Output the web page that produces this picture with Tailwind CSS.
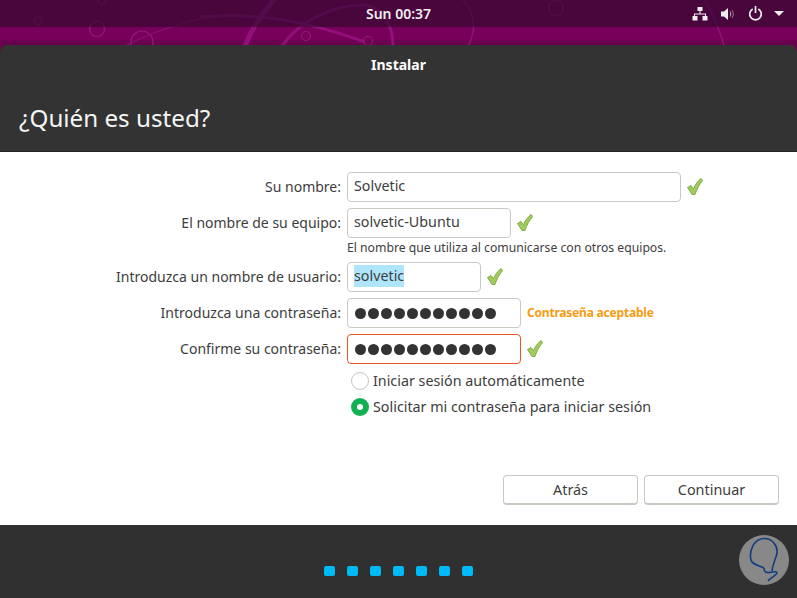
<!DOCTYPE html>
<html lang="es">
<head>
  <meta charset="UTF-8">
  <title>Instalar</title>
  <script src="https://cdn.jsdelivr.net/npm/@tailwindcss/browser@4"></script>
</head>
<body class="w-[797px] h-[598px] overflow-hidden bg-[#6e0050] font-['Noto_Sans',sans-serif] text-[#3d3d3d] relative">
  <!-- wallpaper -->
  <svg class="absolute left-0 top-0" width="797" height="46" viewBox="0 0 797 46" fill="none">
    <rect width="797" height="46" fill="#76005a"/>
    <rect y="40" width="797" height="6" fill="#6c0050"/>
    <g stroke="#93197a" stroke-width="1.2">
      <circle cx="38" cy="21" r="4"/>
      <circle cx="97" cy="29" r="7.5"/>
      <circle cx="142" cy="42" r="11"/>
      <circle cx="102" cy="0" r="4"/>
      <circle cx="306" cy="36" r="4.5"/>
      <circle cx="368" cy="41" r="4.5"/>
      <circle cx="556" cy="8" r="7.5"/>
    </g>
    <g stroke="#93107a">
      <path d="M125 46C160 28 200 16 240 14"/>
      <path d="M200 17C260 12 310 22 365 42" stroke-width="3"/>
      <path d="M245 46C252 28 262 12 278 -4" stroke-width="5"/>
      <path d="M282 46C300 20 335 4 365 5C385 8 393 28 393 46" stroke-width="3"/>
      <path d="M463 0C476 14 476 32 468 46" stroke-width="1.5"/>
      <path d="M705 0C713 15 720 30 724 46" stroke-width="1.5"/>
    </g>
    <rect width="797" height="27" fill="#2c0a2c" fill-opacity="0.62"/>
  </svg>

  <!-- top bar -->
  <div class="relative h-[27px] grid grid-cols-[1fr_auto_1fr] items-center text-[#eeeeee]">
    <div></div>
    <div class="text-[14px] font-semibold">Sun 00:37</div>
    <div class="flex justify-end items-center">
      <svg class="mr-[13px]" width="16" height="14" viewBox="0 0 16 14" fill="#eeeeee">
        <rect x="5.500" y="0" width="5" height="4"/>
        <rect x="0.500" y="9" width="5" height="4.500"/>
        <rect x="10.500" y="9" width="5" height="4.500"/>
        <path d="M7.500 4h1v2.500h5.500v3h-1v-2H3v2H2v-3h5.500z"/>
      </svg>
      <svg class="mr-[12px]" width="15" height="14" viewBox="0 0 15 14">
        <path d="M0 4.500h3L7 1v12L3 9.500H0z" fill="#eeeeee"/>
        <path d="M9 4.500c1 1.500 1 3.500 0 5" stroke="#c9a9bb" fill="none"/>
        <path d="M11 3c1.700 2.500 1.700 5.500 0 8" stroke="#9c6f8c" fill="none"/>
      </svg>
      <svg class="mr-[11px]" width="15" height="15" viewBox="0 0 16 16" fill="none" stroke="#eeeeee" stroke-width="1.800">
        <path d="M5 3.200a6.200 6.200 0 1 0 6 0"/>
        <path d="M8 0v7.500"/>
      </svg>
      <div class="mr-[13px] w-0 h-0 border-x-[5px] border-x-transparent border-t-[5px] border-t-[#eeeeee]"></div>
    </div>
  </div>

  <!-- window -->
  <div class="relative mt-[18px] h-[553px] rounded-t-[7px] overflow-hidden flex flex-col">
    <div class="h-[107px] bg-[#333333] border-b border-[#222222] text-white flex flex-col">
      <div class="h-[38px] flex items-center justify-center text-[14px] font-bold">Instalar</div>
      <div class="mt-[17px] pl-[19px] text-[24.2px] leading-9 text-[#f5f5f5]">¿Quién es usted?</div>
    </div>

    <div class="h-[373px] bg-white pt-5 text-[14px]">
      <div class="flex flex-col gap-[6px]">
        <div class="flex items-center h-[30px]">
          <label class="w-[341px] pb-[2px] text-right">Su nombre:</label>
          <div class="ml-[6px] w-[334px] h-full border border-[#cdc7c2] rounded-[4px] px-[6px] pb-[2px] flex items-center text-[14.3px]">Solvetic</div>
          <svg class="ml-[6px] mb-[2px]" width="16" height="17" viewBox="0 0 16 17"><path d="M0.500 9.500l3.500-2 2.500 3.200C8 6.500 11 3 14 0.500l1.800 2C12.500 6 10 10.500 8 16.500H5z" fill="#a0cc5c" stroke="#6f9a35" stroke-width="0.800"/></svg>
        </div>
        <div>
          <div class="flex items-center h-[30px]">
            <label class="w-[341px] pb-[2px] text-right">El nombre de su equipo:</label>
            <div class="ml-[6px] w-[164px] h-full border border-[#cdc7c2] rounded-[4px] px-[6px] pb-[2px] flex items-center text-[14.3px]">solvetic-Ubuntu</div>
            <svg class="ml-[6px] mb-[2px]" width="16" height="17" viewBox="0 0 16 17"><path d="M0.500 9.500l3.500-2 2.500 3.200C8 6.500 11 3 14 0.500l1.800 2C12.500 6 10 10.500 8 16.500H5z" fill="#a0cc5c" stroke="#6f9a35" stroke-width="0.800"/></svg>
          </div>
          <div class="pl-[347px] h-[18px] text-[12.2px] leading-[20px]">El nombre que utiliza al comunicarse con otros equipos.</div>
        </div>
        <div class="flex items-center h-[30px]">
          <label class="w-[341px] pb-[2px] text-right">Introduzca un nombre de usuario:</label>
          <div class="ml-[6px] w-[134px] h-full border border-[#cdc7c2] rounded-[4px] px-[6px] pb-[2px] flex items-center text-[14.3px]"><span class="bg-[#aee5fb]">solvetic</span></div>
          <svg class="ml-[6px] mb-[2px]" width="16" height="17" viewBox="0 0 16 17"><path d="M0.500 9.500l3.500-2 2.500 3.200C8 6.500 11 3 14 0.500l1.800 2C12.500 6 10 10.500 8 16.500H5z" fill="#a0cc5c" stroke="#6f9a35" stroke-width="0.800"/></svg>
        </div>
        <div class="flex items-center h-[30px]">
          <label class="w-[341px] pb-[2px] text-right">Introduzca una contraseña:</label>
          <div class="ml-[6px] w-[174px] h-full border border-[#cdc7c2] rounded-[4px] px-[7px] flex items-center gap-[2px]">
            <i class="size-[11px] rounded-full bg-[#333333]"></i><i class="size-[11px] rounded-full bg-[#333333]"></i><i class="size-[11px] rounded-full bg-[#333333]"></i><i class="size-[11px] rounded-full bg-[#333333]"></i><i class="size-[11px] rounded-full bg-[#333333]"></i><i class="size-[11px] rounded-full bg-[#333333]"></i><i class="size-[11px] rounded-full bg-[#333333]"></i><i class="size-[11px] rounded-full bg-[#333333]"></i><i class="size-[11px] rounded-full bg-[#333333]"></i><i class="size-[11px] rounded-full bg-[#333333]"></i><i class="size-[11px] rounded-full bg-[#333333]"></i>
          </div>
          <span class="ml-[6px] pb-[1px] text-[12px] tracking-[-0.2px] font-bold text-[#f99b11]">Contraseña aceptable</span>
        </div>
        <div class="flex items-center h-[30px]">
          <label class="w-[341px] pb-[2px] text-right">Confirme su contraseña:</label>
          <div class="ml-[6px] w-[174px] h-full border border-[#e95420] rounded-[4px] px-[7px] flex items-center gap-[2px]">
            <i class="size-[11px] rounded-full bg-[#333333]"></i><i class="size-[11px] rounded-full bg-[#333333]"></i><i class="size-[11px] rounded-full bg-[#333333]"></i><i class="size-[11px] rounded-full bg-[#333333]"></i><i class="size-[11px] rounded-full bg-[#333333]"></i><i class="size-[11px] rounded-full bg-[#333333]"></i><i class="size-[11px] rounded-full bg-[#333333]"></i><i class="size-[11px] rounded-full bg-[#333333]"></i><i class="size-[11px] rounded-full bg-[#333333]"></i><i class="size-[11px] rounded-full bg-[#333333]"></i><i class="size-[11px] rounded-full bg-[#333333]"></i>
          </div>
          <svg class="ml-[6px] mb-[2px]" width="16" height="17" viewBox="0 0 16 17"><path d="M0.500 9.500l3.500-2 2.500 3.200C8 6.500 11 3 14 0.500l1.800 2C12.500 6 10 10.500 8 16.500H5z" fill="#a0cc5c" stroke="#6f9a35" stroke-width="0.800"/></svg>
        </div>
      </div>
      <div class="pl-[351px] mt-[4px] flex flex-col text-[14.3px]">
        <div class="h-[26px] flex items-center gap-[4px]">
          <span class="size-[18px] rounded-full border border-[#c8c4c0] bg-white"></span>Iniciar sesión automáticamente
        </div>
        <div class="h-[26px] flex items-center gap-[4px]">
          <span class="size-[18px] rounded-full bg-[#0eb04f] flex items-center justify-center"><span class="size-[6px] rounded-full bg-white"></span></span>Solicitar mi contraseña para iniciar sesión
        </div>
      </div>
      <div class="mt-[55px] pr-[18px] flex justify-end gap-[6px] text-[14.4px]">
        <button class="w-[135px] h-[30px] bg-white border border-[#cdc7c2] border-b-2 rounded-[4px]">Atrás</button>
        <button class="w-[135px] h-[30px] bg-white border border-[#cdc7c2] border-b-2 rounded-[4px]">Continuar</button>
      </div>
    </div>

    <div class="h-[73px] bg-[#303030] flex justify-center gap-[12px] pt-[41px]">
      <i class="w-[11px] h-[10px] rounded-[2px] bg-[#00b9f7]"></i><i class="w-[11px] h-[10px] rounded-[2px] bg-[#00b9f7]"></i><i class="w-[11px] h-[10px] rounded-[2px] bg-[#00b9f7]"></i><i class="w-[11px] h-[10px] rounded-[2px] bg-[#00b9f7]"></i><i class="w-[11px] h-[10px] rounded-[2px] bg-[#00b9f7]"></i><i class="w-[11px] h-[10px] rounded-[2px] bg-[#00b9f7]"></i><i class="w-[11px] h-[10px] rounded-[2px] bg-[#00b9f7]"></i>
    </div>
  </div>

  <!-- watermark -->
  <svg class="absolute left-[739px] top-[534px]" width="50" height="52" viewBox="0 0 50 52" fill="none">
    <circle cx="25" cy="26" r="25" fill="#888888"/>
    <path d="M25 34C18 31 13 30 12 26C10 18 14 5 25 4.500C33 4 39 12 38 19C37 25 34 28 33 37M25 34C25 37 26 39 30 38.500C34 38 38 37 38 39C38 41 31 44 29 47" stroke="#0f3d80" stroke-width="1.600"/>
  </svg>
</body>
</html>
